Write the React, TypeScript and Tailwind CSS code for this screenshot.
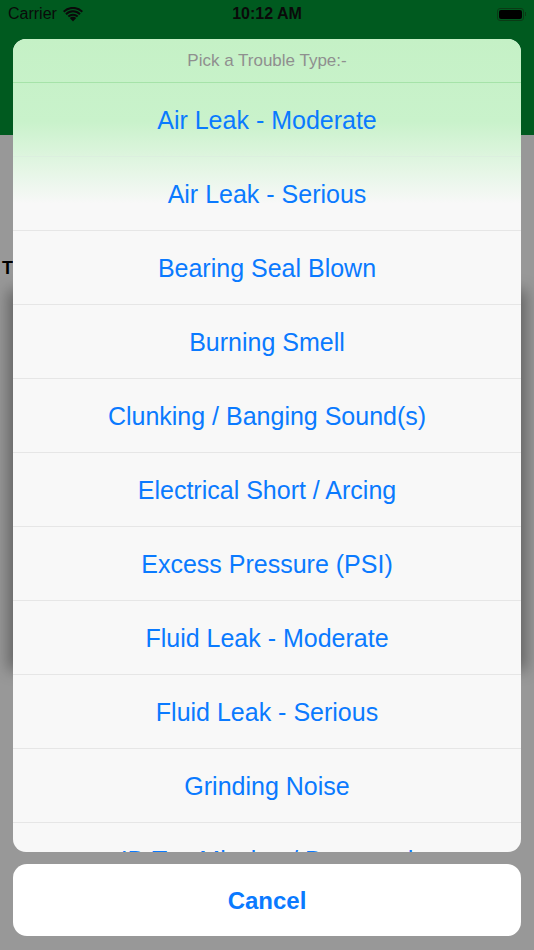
const items = [
  "Air Leak - Moderate",
  "Air Leak - Serious",
  "Bearing Seal Blown",
  "Burning Smell",
  "Clunking / Banging Sound(s)",
  "Electrical Short / Arcing",
  "Excess Pressure (PSI)",
  "Fluid Leak - Moderate",
  "Fluid Leak - Serious",
  "Grinding Noise",
  "ID Tag Missing / Damaged",
];

function Wifi() {
  return (
    <svg width="20" height="15" viewBox="0 0 20 15" className="ml-[6px]">
      <path d="M10 14.5 L6.8 11.1 A4.6 4.6 0 0 1 13.2 11.1 Z" fill="#0a0a0a" />
      <path d="M4.6 8.8 A7.8 7.8 0 0 1 15.4 8.8 L14 10.3 A5.8 5.8 0 0 0 6 10.3 Z" fill="#0a0a0a" />
      <path d="M2.3 6.4 A11 11 0 0 1 17.7 6.4 L16.3 7.9 A9 9 0 0 0 3.7 7.9 Z" fill="#0a0a0a" />
      <path d="M0 4 A14.2 14.2 0 0 1 20 4 L18.6 5.5 A12.2 12.2 0 0 0 1.4 5.5 Z" fill="#0a0a0a" />
    </svg>
  );
}

export default function App() {
  return (
    <div
      className="relative w-[534px] h-[950px] overflow-hidden bg-[#989898]"
      style={{ fontFamily: '"Liberation Sans", Arial, sans-serif' }}
    >
      {/* Underlying screen (dimmed) */}
      <div className="h-[135px] bg-[#005a1f]">
        <div className="h-[28px] flex items-center justify-between px-[8px] text-[16px] text-[#0a0a0a]">
          <div className="flex items-center w-[140px]">
            <span>Carrier</span>
            <Wifi />
          </div>
          <span className="font-bold">10:12 AM</span>
          <div className="w-[140px] flex justify-end items-center">
            <div className="w-[27px] h-[13px] rounded-[3px] border border-[#0a3a15] p-[1px]">
              <div className="w-full h-full rounded-[2px] bg-black" />
            </div>
            <div className="w-[1.5px] h-[4px] bg-[#0a3a15] ml-[1px]" />
          </div>
        </div>
      </div>
      <div className="pt-[124px] pl-[2px] text-[18px] font-bold text-black leading-none">T</div>
      <div className="mt-[19px] mx-[14px] h-[368px] bg-[#f4f4f4] shadow-[0_0_14px_6px_rgba(0,0,0,0.35)]" />

      {/* Action sheet */}
      <div className="absolute left-[13px] right-[13px] top-[39px] flex flex-col gap-[12px]">
        <div className="h-[813px] rounded-[13px] overflow-hidden bg-[#f8f8f8] flex flex-col relative">
          <div className="absolute inset-x-0 top-0 h-[165px] bg-gradient-to-b from-[#c5f1c6] via-[#c9f2cb] to-[#f8f8f8]" />
          <div className="relative h-[44px] shrink-0 flex items-center justify-center text-[17px] text-[#8f8f8f] border-b-[1.5px] border-[#a6e3a9]">
            Pick a Trouble Type:-
          </div>
          {items.map((item, i) => (
            <div
              key={i}
              className={`relative h-[74px] shrink-0 flex items-center justify-center pt-[3px] text-[25px] text-[#0a7aff] ${
                i === 0 ? "border-b border-[#dcefdf]" : "border-b border-[#e6e6e6]"
              }`}
            >
              {item}
            </div>
          ))}
        </div>
        <div className="h-[72px] rounded-[14px] bg-white flex items-center justify-center pt-[2px] text-[24px] font-bold text-[#0a7aff]">
          Cancel
        </div>
      </div>
    </div>
  );
}
